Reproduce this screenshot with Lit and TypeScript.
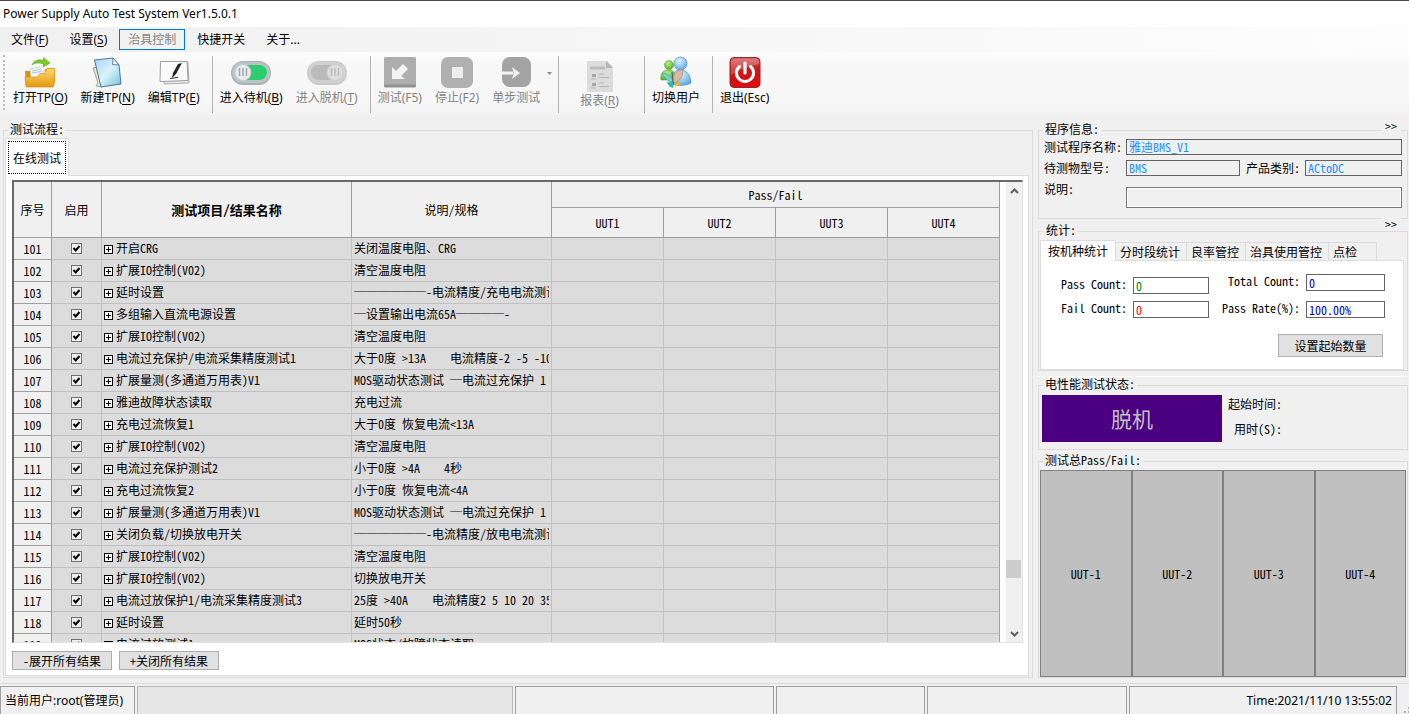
import { LitElement, html, css, svg, nothing } from "lit";
import { customElement } from "lit/decorators.js";
import { classMap } from "lit/directives/class-map.js";

interface Step {
  no: number;
  name: string;
  spec: string;
}

const names: [string, string][] = [
  ["开启CRG", "关闭温度电阻、CRG"],
  ["扩展IO控制(V02)", "清空温度电阻"],
  ["延时设置", "──────-电流精度/充电电流测试"],
  ["多组输入直流电源设置", "─设置输出电流65A────-"],
  ["扩展IO控制(V02)", "清空温度电阻"],
  ["电流过充保护/电流采集精度测试1", "大于0度 >13A    电流精度-2 -5 -10"],
  ["扩展量测(多通道万用表)V1", "MOS驱动状态测试 ─电流过充保护 1"],
  ["雅迪故障状态读取", "充电过流"],
  ["充电过流恢复1", "大于0度 恢复电流<13A"],
  ["扩展IO控制(V02)", "清空温度电阻"],
  ["电流过充保护测试2", "小于0度 >4A    4秒"],
  ["充电过流恢复2", "小于0度 恢复电流<4A"],
  ["扩展量测(多通道万用表)V1", "MOS驱动状态测试 ─电流过充保护 1"],
  ["关闭负载/切换放电开关", "──────-电流精度/放电电流测试"],
  ["扩展IO控制(V02)", "清空温度电阻"],
  ["扩展IO控制(V02)", "切换放电开关"],
  ["电流过放保护1/电流采集精度测试3", "25度 >40A    电流精度2 5 10 20 35"],
  ["延时设置", "延时50秒"],
  ["电流过放测试1", "MOS状态/故障状态读取"],
];
const steps: Step[] = names.map(([name, spec], i) => ({ no: 101 + i, name, spec }));
const units = [1, 2, 3, 4];

const icons = {
  open: svg`
    <defs><linearGradient id="f" x1="0" y1="0" x2="0" y2="1"><stop offset="0" stop-color="#ffd873"/><stop offset="1" stop-color="#e39a0c"/></linearGradient></defs>
    <path d="M20 13l3-2h8v15l-3 4z" fill="#e9ad2c"/>
    <path d="M1 14h6l2 3v12H2z" fill="#d9930f"/>
    <path d="M6 12l10-2 4 9-13 3z" fill="#f4f8fb" stroke="#a9bccb" stroke-width=".6"/>
    <path d="M8 14l8-1.500M8 16l9-1.500" stroke="#9db4c4" stroke-width=".8"/>
    <path d="M2 30L1 20h12l3-3.500h5l2-5h8L29.500 30z" fill="url(#f)" stroke="#d08c10" stroke-width=".6"/>
    <path d="M8 8c2-5 7-6 11-4.500l.5-3L26 6l-7 4 .5-3c-4-1.500-8-1.500-11.500 1z" fill="#7ccb1f" stroke="#55a010" stroke-width=".5"/>`,
  create: svg`
    <defs><linearGradient id="p" x1="0" y1="0" x2="1" y2="1"><stop offset="0" stop-color="#a9d2f5"/><stop offset=".5" stop-color="#d8f4fb"/><stop offset="1" stop-color="#6cc3da"/></linearGradient></defs>
    <path d="M1 11l4-1 5 20-6-1 2-3z" fill="#f3e7b8" stroke="#6a88a8" stroke-width=".7"/>
    <path d="M2.500 3L21 1l6 7 2 19-20 3z" fill="url(#p)" stroke="#43678f" stroke-width=".9"/>
    <path d="M21 1l-.5 6.500L27 8z" fill="#f4fbff" stroke="#43678f" stroke-width=".8"/>`,
  edit: svg`
    <path d="M5 8l25-3 1 21-25 1z" fill="#e4e4e4" stroke="#9a9a9a" stroke-width=".7"/>
    <path d="M2.500 4.500H29l1 19-28 1z" fill="#fbfbfb" stroke="#8a8a8a" stroke-width=".8"/>
    <path d="M20 7l4-1-6 11-4 4 1-5z" fill="#222"/>
    <path d="M12 21.500l8-1" stroke="#333" stroke-width="1.200"/>`,
  on: svg`
    <rect x="0" y="4" width="40" height="24" rx="12" fill="#aab2b8"/>
    <rect x="1" y="5" width="38" height="21" rx="10.500" fill="#bcc3c8"/>
    <rect x="4" y="8" width="32" height="15" rx="7.500" fill="#2ecc71"/>
    <circle cx="12" cy="15.500" r="8" fill="#e9edf0" stroke="#c6ccd0"/>
    <path d="M8.500 11v8M12 11v8M15.500 11v8" stroke="#9ea6ab" stroke-width="1.500"/>`,
  off: svg`
    <rect x="0" y="4" width="40" height="24" rx="12" fill="#c9c9c9"/>
    <rect x="1" y="5" width="38" height="21" rx="10.500" fill="#d0d0d0"/>
    <rect x="4" y="8" width="32" height="15" rx="7.500" fill="#bababa"/>
    <circle cx="28" cy="15.500" r="8" fill="#dedede" stroke="#cfcfcf"/>
    <path d="M24.500 11v8M28 11v8M31.500 11v8" stroke="#bcbcbc" stroke-width="1.500"/>`,
  test: svg`
    <rect width="32" height="30" rx="1.500" fill="#aeaeae"/><path d="M0 27.500h32v1.500q0 1.500-1.500 1.500h-29Q0 30.500 0 29z" fill="#939393"/>
    <path d="M8 22V10l4 4 7-7 5 5-7 7 4 3z" fill="#f3f3f3"/>`,
  stop: svg`
    <rect width="32" height="31" rx="7" fill="#b0b0b0"/><rect x="11" y="10" width="11" height="11" fill="#eee"/>`,
  step: svg`
    <rect x="2" width="29" height="30" rx="8" fill="#a3a3a3"/>
    <path d="M2 14.500h11v3H2z" fill="#f3f3f3"/><path d="M12 10l8 6-8 6 1.500-4.500v-3z" fill="#f3f3f3"/>`,
  report: svg`
    <path d="M3 1h20l6 6v25H3z" fill="#dcdcdc"/><path d="M22 1l7 7h-7z" fill="#b4b4b4"/>
    <path d="M6 8h15" stroke="#bcbcbc" stroke-width="3"/>
    <path d="M8 14h4v3H8zM8 23h4v3H8z" fill="#a6a6a6"/>
    <path d="M15 14h5M15 17.500h10M15 23h5M15 26.500h10M7 19h5M7 28h5" stroke="#b3b3b3"/>`,
  users: svg`
    <defs><radialGradient id="b" cx=".4" cy=".3" r=".8"><stop offset="0" stop-color="#e2f4ff"/><stop offset="1" stop-color="#4da3e2"/></radialGradient>
    <radialGradient id="g" cx=".4" cy=".3" r=".8"><stop offset="0" stop-color="#b9ee8e"/><stop offset="1" stop-color="#4aa81e"/></radialGradient></defs>
    <path d="M1 23c-1-6 2-9 5-10h5c3 1 5 4 5 10z" fill="url(#g)" stroke="#4a9a22" stroke-width=".5"/><circle cx="9" cy="8" r="4.500" fill="url(#g)" stroke="#4a9a22" stroke-width=".5"/>
    <path d="M13 27c-1-9 1-13 5-14h5c6 2 8 8 8 13-5 3-14 3-18 1z" fill="url(#b)" stroke="#3f86c4" stroke-width=".6"/><circle cx="20.500" cy="6.500" r="6.500" fill="url(#b)" stroke="#3f86c4" stroke-width=".6"/>
    <path d="M2 16c6 0 10 4 11 9-6-1-9-4-11-9z" fill="#7dd0c6" stroke="#3b8f9a" stroke-width=".5"/>
    <path d="M13 26c-1-8 3-12 9-14 2 7-1 12-9 14z" fill="#dfb7a0" stroke="#a07a70" stroke-width=".5"/>
    <path d="M7 25l6-1 0 7c-4-1-5-3-6-6z" fill="#35b8b0"/><path d="M14 26l7-1c-1 3-3 5-6 4z" fill="#e5b43d"/>
    <path d="M12 15l1.500 13" stroke="#4a4a58" stroke-width=".8"/>`,
  exit: svg`
    <defs><linearGradient id="r" x1="0" y1="0" x2="0" y2="1"><stop offset="0" stop-color="#d05a58"/><stop offset=".4" stop-color="#c81818"/><stop offset="1" stop-color="#e00c10"/></linearGradient></defs>
    <rect x="1" y=".5" width="30" height="30" rx="4" fill="url(#r)" stroke="#8e2a2a"/>
    <path d="M2 14V5q0-3.500 3.500-3.500h21Q30 1.500 30 5v2Q18 9 2 18z" fill="#fff" opacity=".22"/>
    <path d="M10.500 9.500a8.500 8.500 0 1 0 11 0" fill="none" stroke="#fff" stroke-width="3" stroke-linecap="round"/>
    <path d="M16 6v10" stroke="#fff" stroke-width="3.200" stroke-linecap="round"/>`,
};

type IconName = keyof typeof icons;

@customElement("app-root")
export class AppRoot extends LitElement {
  static styles = css`
    :host {
      --line: #dcdcdc;
      --dark: #a0a0a0;
      --song: "Noto Sans Mono CJK SC", "Noto Sans CJK SC", monospace;
      --ui: "Noto Sans", "Noto Sans CJK SC", sans-serif;
      display: flex;
      flex-direction: column;
      height: 100vh;
      overflow: hidden;
      background: #f0f0f0;
      color: #000;
      font: 12px/14px var(--song);
    }
    * { box-sizing: border-box; }
    button, input { font: inherit; color: inherit; margin: 0; border-radius: 0; }
    button { padding: 0; border: 0; background: none; white-space: nowrap; }
    label { white-space: nowrap; }
    u { text-underline-offset: 2px; }

    .title { flex: none; height: 27px; border-top: 1px solid #4a4a50; background: #fff; padding: 0 3px; font: 12px/26px var(--ui); }
    .menu { flex: none; display: flex; height: 25px; padding: 2px 1px; background: linear-gradient(90deg, #f0f0f0, #fdfdfd); }
    .menu button { height: 21px; margin: 0 2px 0 1px; padding: 0 8px; border: 1px solid transparent; font: 12px/18px var(--ui); }
    .menu .hot { border-color: #0078d7; color: #838383; }

    .tools { flex: none; display: flex; height: 66px; padding: 3px 0 4px 3px; background: linear-gradient(#fdfdfd, #f7f7f7 20%, #f7f7f7 75%, #f0f0f0); font: 12px/18px var(--ui); }
    .grip { width: 3px; margin-right: 1px; border-left: 2px dotted #bdbdbd; height: 55px; }
    .tool { display: flex; flex-direction: column; align-items: center; padding: 2px 7px 0 6px; font: inherit; }
    .tool svg { display: block; height: 32px; overflow: visible; }
    .tool.low { padding: 5px 20px 0; }
    .off { color: #838383; }
    .sep { width: 1px; height: 57px; margin: 1px 1px 0 5px; background: #b4b4b4; }
    .drop { padding: 0 1px 28px 0; }

    .main { flex: 1; min-height: 0; display: flex; gap: 5px; padding: 5px 1px 5px 3px; }
    fieldset { position: relative; min-width: 0; margin: 0; padding: 0; border: 1px solid var(--line); }
    legend { margin-left: 4px; padding: 0 2px; height: 14px; line-height: 12px; }
    .flow { flex: 1; display: flex; flex-direction: column; }
    .flow-body { flex: 1; min-height: 0; height: 100%; display: flex; flex-direction: column; padding: 1px 3px 1px 1px; }
    .tab-main { align-self: flex-start; height: 38px; margin-bottom: -1px; padding: 2px; border: 1px solid var(--line); border-bottom: 0; background: #fff; z-index: 1; }
    .tab-main span { display: block; padding: 0 4px; line-height: 31px; border: 1px dotted #000; }
    .page { flex: 1; min-height: 0; display: flex; flex-direction: column; padding: 4px 5px 5px 6px; border: 1px solid var(--line); background: #fff; }
    .frame { flex: 1; min-height: 0; display: flex; border: 1px solid #e3e3e3; border-top: 2px solid #696969; border-left: 2px solid #696969; }
    .scroll { flex: 1; min-width: 0; overflow: hidden; padding-right: 7px; }
    table { width: 100%; table-layout: fixed; border-collapse: separate; border-spacing: 0; }
    th { padding: 0; background: #f0f0f0; border: solid var(--dark); border-width: 0 1px 1px 0; font-weight: 400; text-align: center; }
    thead th { height: 30px; }
    thead .top { height: 26px; }
    th.strong { font-weight: 700; font-size: 13px; }
    td { height: 22px; padding: 0 2px 1px; background: #dcdcdc; border: solid #c0c0c0; border-width: 0 1px 1px 0; }
    td div { overflow: hidden; white-space: pre; line-height: 20px; }
    td:last-child { border-right-color: var(--dark); }
    td:nth-child(2) { padding: 0; }
    td button { display: inline-block; width: 9px; height: 9px; margin-right: 3px; border: 1px solid #000; vertical-align: 0;
      background: linear-gradient(#000, #000) center / 5px 1px no-repeat, linear-gradient(#000, #000) center / 1px 5px no-repeat, #fff; }
    input[type="checkbox"] { appearance: none; display: block; width: 11px; height: 11px; margin: 0 auto; border: 1px solid #707070; background: #f0f0f0; }
    input[type="checkbox"]:checked { background: #f0f0f0 url('data:image/svg+xml,<svg xmlns="http://www.w3.org/2000/svg" viewBox="0 0 9 9"><path d="M1.500 4l2.200 2.500L7.500 2" fill="none" stroke="black" stroke-width="2"/></svg>'); }
    .bar { width: 16px; display: flex; flex-direction: column; align-items: center; padding: 6px 0 5px; background: #f0f0f0; }
    .rail { flex: 1; width: 100%; display: flex; flex-direction: column; }
    .rail::before { content: ""; flex: 83; }
    .rail::after { content: ""; flex: 12; }
    .thumb { width: 15px; height: 18px; background: #cdcdcd; }
    .btns { display: flex; gap: 7px; margin-top: 8px; }
    .btn { height: 19px; border: 1px solid #adadad; background: #e1e1e1; }
    .btns .btn { width: 100px; line-height: 15px; }

    .side { width: 370px; display: flex; flex-direction: column; }
    .more { position: absolute; top: -17px; right: 6px; padding: 0 4px; background: #f0f0f0; line-height: 12px; }
    .stat .more { top: -20px; }
    .info { height: 96px; margin-bottom: 5px; }
    .info-grid { display: grid; grid-template-columns: 82px 114px 65px 1fr; row-gap: 5px; padding: 2px 5px 0; line-height: 15px; }
    .second { padding-left: 6px; }
    .box { width: 100%; min-width: 0; height: 17px; padding: 0 2px 1px; border: 1px solid #646464; background: #fff; outline: 0; line-height: 14px; }
    .info .box { height: 16px; padding-bottom: 2px; background: #f0f0f0; color: #1e90ff; line-height: 12px; }
    .wide { grid-column: 2 / -1; }
    .info .note { height: 21px; margin-top: 6px; border-color: #7a7a7a; box-shadow: inset 0 0 0 1px #fff; }
    .stat { height: 147px; margin-bottom: 5px; padding: 2px 3px 1px 1px; }
    .tabs { display: flex; align-items: flex-end; height: 21px; margin-bottom: -1px; }
    .tabs button { height: 19px; padding: 0 6px 0 4px; border: 1px solid var(--line); border-left: 0; line-height: 17px; }
    .tabs .now { position: relative; height: 21px; padding: 0 7px 2px; border-left: 1px solid var(--line); border-bottom: 0; background: #fff; }
    .tabs button:last-child { padding-right: 19px; }
    .counts { display: grid; grid-template-columns: 168px 1fr; align-content: start; padding: 13px 18px 12px 0; border: 1px solid var(--line); background: #fff; }
    .col { display: grid; grid-template-columns: 1fr 76px; gap: 7px 6px; text-align: right; padding-top: 3px; line-height: 14px; }
    .col.right { grid-template-columns: 1fr 79px; row-gap: 10px; padding-top: 0; }
    .counts .btn { grid-column: 2; justify-self: end; width: 105px; height: 23px; margin: 16px 2px 0 0; }
    .green { color: #008000; }
    .red { color: #f00; }
    .blue { color: #0000c0; }
    .rule { flex: none; height: 1px; margin: 0 2px 1px 0; background: #fff; }
    .state { height: 72px; margin-bottom: 4px; }
    .state-body { display: flex; gap: 6px; padding: 3px; }
    .lamp { width: 180px; background: #4b0082; color: #c0c0c0; font-size: 21px; line-height: 47px; text-align: center; }
    .times { text-align: right; line-height: 25px; margin-top: -4px; }
    .total { flex: 1; }
    .uuts { height: 100%; display: flex; padding: 2px 1px 0; }
    .uut { flex: 1; display: flex; align-items: center; justify-content: center; border: 1px solid #808080; background: #c0c0c0; }

    .status { flex: none; display: grid; grid-template-columns: 135px 375fr 259fr 149fr 199fr 268fr 10px; gap: 2px; height: 31px; padding-top: 2px; border-top: 1px solid var(--line); font: 12px/28px var(--ui); }
    .status div { min-width: 0; border: 1px solid var(--dark); border-bottom: 0; padding: 0 4px; white-space: nowrap; }
    .status .blank { border-color: #b8b8b8; background: #e6e6e6; }
    .time { text-align: right; }
    .size { align-self: end; height: 9px; background: radial-gradient(#b0b0b0 1px, transparent 1px) 0 0 / 4px 4px; clip-path: polygon(100% 0, 100% 100%, 0 100%); }
  `;

  private tool(icon: IconName, label: string, key = "", off = false, width = 32, low = false) {
    return html`<button class=${classMap({ tool: true, off, low })} ?disabled=${off}>
      <svg width=${width} viewBox="0 0 ${width} 32" aria-hidden="true">${icons[icon]}</svg>
      <span>${label}${key ? html`(<u>${key}</u>)` : nothing}</span>
    </button>`;
  }

  private get sep() {
    return html`<div class="sep"></div>`;
  }

  private get toolbar() {
    return html`<div class="tools" role="toolbar">
      <div class="grip"></div>
      ${this.tool("open", "打开TP", "O")}${this.tool("create", "新建TP", "N")}${this.tool("edit", "编辑TP", "E")}
      ${this.sep}${this.tool("on", "进入待机", "B", false, 40)}${this.tool("off", "进入脱机", "T", true, 40)}
      ${this.sep}${this.tool("test", "测试(F5)", "", true)}${this.tool("stop", "停止(F2)", "", true)}${this.tool("step", "单步测试", "", true)}
      <button class="drop" aria-label="单步测试"><svg width="5" height="3"><path d="M0 0h5L2.500 3z" fill="#8a8a8a" /></svg></button>
      ${this.sep}${this.tool("report", "报表", "R", true, 32, true)}
      ${this.sep}${this.tool("users", "切换用户")}
      ${this.sep}${this.tool("exit", "退出(Esc)")}
    </div>`;
  }

  private get flow() {
    return html`<fieldset class="flow">
      <legend>测试流程:</legend>
      <div class="flow-body">
        <button class="tab-main"><span>在线测试</span></button>
        <div class="page">
          <div class="frame">
            <div class="scroll">
              <table>
                <colgroup>
                  <col width="38" /><col width="50" /><col width="250" /><col width="200" />
                  ${units.map(() => html`<col width="112" />`)}
                </colgroup>
                <thead>
                  <tr>
                    <th class="top" rowspan="2">序号</th>
                    <th rowspan="2">启用</th>
                    <th rowspan="2" class="strong">测试项目/结果名称</th>
                    <th rowspan="2">说明/规格</th>
                    <th colspan="4" class="top">Pass/Fail</th>
                  </tr>
                  <tr>${units.map((n) => html`<th>UUT${n}</th>`)}</tr>
                </thead>
                <tbody>
                  ${steps.map((s) => html`<tr>
                    <th>${s.no}</th>
                    <td><input type="checkbox" checked aria-label="启用 ${s.no}" /></td>
                    <td><div><button aria-label="展开 ${s.no}"></button>${s.name}</div></td>
                    <td><div>${s.spec}</div></td>
                    ${units.map(() => html`<td></td>`)}
                  </tr>`)}
                </tbody>
              </table>
            </div>
            <div class="bar">
              <svg width="9" height="6"><path d="M1 5l3.500-3.500L8 5" fill="none" stroke="#606060" stroke-width="2" /></svg>
              <div class="rail"><div class="thumb"></div></div>
              <svg width="9" height="6"><path d="M1 1l3.500 3.500L8 1" fill="none" stroke="#606060" stroke-width="2" /></svg>
            </div>
          </div>
          <div class="btns"><button class="btn">-展开所有结果</button><button class="btn">+关闭所有结果</button></div>
        </div>
      </div>
    </fieldset>`;
  }

  private get side() {
    return html`<div class="side">
      <fieldset class="info">
        <legend>程序信息:</legend>
        <button class="more">&gt;&gt;</button>
        <div class="info-grid">
          <label for="prog">测试程序名称:</label><input id="prog" class="box wide" readonly value="雅迪BMS_V1" />
          <label for="model">待测物型号:</label><input id="model" class="box" readonly value="BMS" />
          <label for="kind" class="second">产品类别:</label><input id="kind" class="box" readonly value="ACtoDC" />
          <label for="note">说明:</label><input id="note" class="box wide note" readonly />
        </div>
      </fieldset>
      <fieldset class="stat">
        <legend>统计:</legend>
        <button class="more">&gt;&gt;</button>
        <div class="tabs">
          <button class="now">按机种统计</button><button>分时段统计</button><button>良率管控</button><button>治具使用管控</button><button>点检</button>
        </div>
        <div class="counts">
          <div class="col">
            <label for="pass">Pass Count:</label><input id="pass" class="box green" value="0" />
            <label for="fail">Fail Count:</label><input id="fail" class="box red" value="0" />
          </div>
          <div class="col right">
            <label for="sum">Total Count:</label><input id="sum" class="box blue" value="0" />
            <label for="rate">Pass Rate(%):</label><input id="rate" class="box blue" value="100.00%" />
          </div>
          <button class="btn">设置起始数量</button>
        </div>
      </fieldset>
      <div class="rule"></div>
      <fieldset class="state">
        <legend>电性能测试状态:</legend>
        <div class="state-body">
          <div class="lamp">脱机</div>
          <div class="times"><div>起始时间:</div><div>用时(S):</div></div>
        </div>
      </fieldset>
      <fieldset class="total">
        <legend>测试总Pass/Fail:</legend>
        <div class="uuts">${units.map((n) => html`<div class="uut">UUT-${n}</div>`)}</div>
      </fieldset>
    </div>`;
  }

  render() {
    return html`
      <div class="title">Power Supply Auto Test System Ver1.5.0.1</div>
      <nav class="menu">
        <button>文件(<u>F</u>)</button><button>设置(<u>S</u>)</button><button class="hot">治具控制</button><button>快捷开关</button><button>关于...</button>
      </nav>
      ${this.toolbar}
      <div class="main">${this.flow}${this.side}</div>
      <div class="status">
        <div>当前用户:root(管理员)</div>
        <div class="blank"></div><div></div><div></div><div></div>
        <div class="time">Time:2021/11/10 13:55:02</div>
        <span class="size"></span>
      </div>
    `;
  }
}
